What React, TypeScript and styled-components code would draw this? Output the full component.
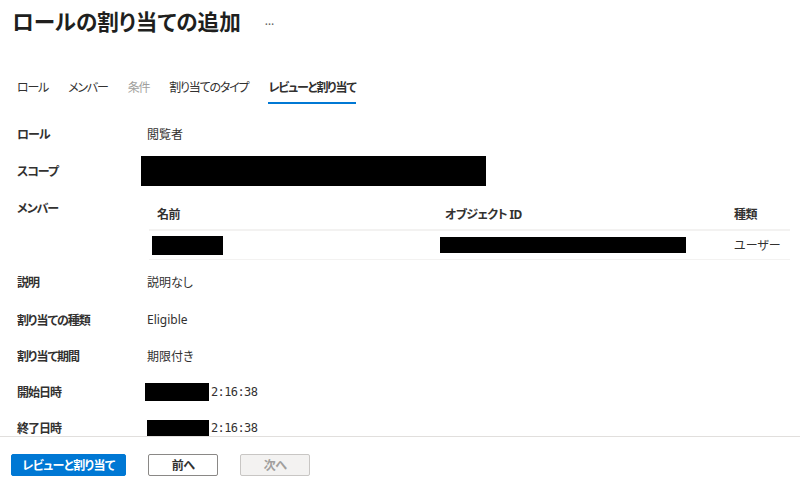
import React from 'react';
import styled, { createGlobalStyle } from 'styled-components';

const GlobalStyle = createGlobalStyle`
  html, body {
    margin: 0;
    padding: 0;
    background: #fff;
  }
  body {
    font-family: "Noto Sans", "Noto Sans CJK JP", sans-serif;
    font-feature-settings: "palt";
    color: #323130;
  }
`;

const Page = styled.div`
  width: 800px;
  height: 490px;
  display: flex;
  flex-direction: column;
  overflow: hidden;
`;

const Header = styled.div`
  display: flex;
  align-items: center;
  padding: 2px 12px 0 12px;
  height: 38px;
  box-sizing: border-box;
`;

const Title = styled.h1`
  margin: 0;
  font-size: 21.6px;
  font-weight: 700;
  color: #201f1e;
`;

const More = styled.span`
  margin-left: 24px;
  font-size: 12px;
  color: #605e5c;
  letter-spacing: 1px;
`;

const Tabs = styled.div`
  display: flex;
  gap: 20px;
  padding: 40px 0 0 17px;
`;

const Tab = styled.div<{ $active?: boolean; $disabled?: boolean }>`
  font-size: 12px;
  letter-spacing: -1.2px;
  padding-bottom: 6px;
  font-weight: ${p => (p.$active ? 700 : 400)};
  color: ${p => (p.$disabled ? '#a19f9d' : '#323130')};
  border-bottom: 2px solid ${p => (p.$active ? '#0078d4' : 'transparent')};
`;

const Content = styled.div`
  flex: 1;
  overflow: hidden;
  padding-top: 11px;
`;

const Row = styled.div<{ $h?: number }>`
  display: grid;
  grid-template-columns: 130px 1fr;
  align-items: center;
  min-height: ${p => p.$h ?? 37}px;
  padding-left: 17px;
  padding-right: 10px;
`;

const Label = styled.div<{ $top?: boolean }>`
  font-size: 12px;
  font-weight: 700;
  letter-spacing: -1px;
  color: #323130;
  align-self: ${p => (p.$top ? 'start' : 'center')};
  padding-top: ${p => (p.$top ? '9px' : '0')};
`;

const Value = styled.div`
  font-size: 12px;
  color: #323130;
  display: flex;
  align-items: center;
`;

const Redacted = styled.div<{ $w: number; $h: number; $ml?: number }>`
  width: ${p => p.$w}px;
  height: ${p => p.$h}px;
  margin-left: ${p => p.$ml ?? 0}px;
  background: #000;
  flex-shrink: 0;
`;

const Time = styled.span`
  font-family: "DejaVu Sans Mono", monospace;
  font-size: 12px;
  letter-spacing: -0.6px;
  color: #323130;
  margin-left: 2px;
`;

const Table = styled.div`
  margin: 9px 0 3px 2px;
`;

const TableRow = styled.div<{ $head?: boolean }>`
  display: grid;
  grid-template-columns: 288px 289px 1fr;
  align-items: center;
  height: ${p => (p.$head ? 30 : 28)}px;
  border-bottom: ${p => (p.$head ? '2px solid #f3f2f1' : '1px solid #f3f2f1')};
`;

const Cell = styled.div<{ $head?: boolean; $pad?: number }>`
  font-size: 12px;
  font-weight: ${p => (p.$head ? 700 : 400)};
  letter-spacing: ${p => (p.$head ? '-0.6px' : '0')};
  color: #323130;
  padding-left: ${p => p.$pad ?? 8}px;
  display: flex;
  align-items: center;
`;

const Footer = styled.div`
  height: 54px;
  border-top: 1px solid #e1dfdd;
  display: flex;
  align-items: flex-start;
  gap: 22px;
  padding: 17px 0 0 11px;
  box-sizing: border-box;
`;

const Button = styled.button<{ $variant: 'primary' | 'default' | 'disabled'; $w: number }>`
  width: ${p => p.$w}px;
  height: 22px;
  font-family: inherit;
  font-feature-settings: "palt";
  font-size: 12px;
  font-weight: 700;
  letter-spacing: -0.6px;
  border-radius: 2px;
  padding: 0;
  cursor: pointer;
  border: 1px solid
    ${p => (p.$variant === 'primary' ? '#0078d4' : p.$variant === 'default' ? '#8a8886' : '#c8c6c4')};
  background: ${p => (p.$variant === 'primary' ? '#0078d4' : p.$variant === 'default' ? '#fff' : '#f3f2f1')};
  color: ${p => (p.$variant === 'primary' ? '#fff' : p.$variant === 'default' ? '#323130' : '#a19f9d')};
`;

export default function App() {
  return (
    <Page>
      <GlobalStyle />
      <Header>
        <Title>ロールの割り当ての追加</Title>
        <More>…</More>
      </Header>
      <Tabs>
        <Tab>ロール</Tab>
        <Tab>メンバー</Tab>
        <Tab $disabled>条件</Tab>
        <Tab>割り当てのタイプ</Tab>
        <Tab $active>レビューと割り当て</Tab>
      </Tabs>
      <Content>
        <Row>
          <Label>ロール</Label>
          <Value>閲覧者</Value>
        </Row>
        <Row $h={38}>
          <Label>スコープ</Label>
          <Value>
            <Redacted $w={345} $h={30} $ml={-6} />
          </Value>
        </Row>
        <Row>
          <Label $top>メンバー</Label>
          <Table>
            <TableRow $head>
              <Cell $head>名前</Cell>
              <Cell $head>オブジェクト ID</Cell>
              <Cell $head>種類</Cell>
            </TableRow>
            <TableRow>
              <Cell $pad={3}>
                <Redacted $w={71} $h={19} />
              </Cell>
              <Cell $pad={3}>
                <Redacted $w={246} $h={16} />
              </Cell>
              <Cell>ユーザー</Cell>
            </TableRow>
          </Table>
        </Row>
        <Row $h={38}>
          <Label>説明</Label>
          <Value>説明なし</Value>
        </Row>
        <Row $h={37}>
          <Label>割り当ての種類</Label>
          <Value>Eligible</Value>
        </Row>
        <Row $h={36}>
          <Label>割り当て期間</Label>
          <Value>期限付き</Value>
        </Row>
        <Row $h={36}>
          <Label>開始日時</Label>
          <Value>
            <Redacted $w={64} $h={18} $ml={-2} />
            <Time>2:16:38</Time>
          </Value>
        </Row>
        <Row $h={36}>
          <Label>終了日時</Label>
          <Value>
            <Redacted $w={62} $h={17} />
            <Time>2:16:38</Time>
          </Value>
        </Row>
      </Content>
      <Footer>
        <Button $variant="primary" $w={115}>レビューと割り当て</Button>
        <Button $variant="default" $w={70}>前へ</Button>
        <Button $variant="disabled" $w={70} disabled>次へ</Button>
      </Footer>
    </Page>
  );
}
